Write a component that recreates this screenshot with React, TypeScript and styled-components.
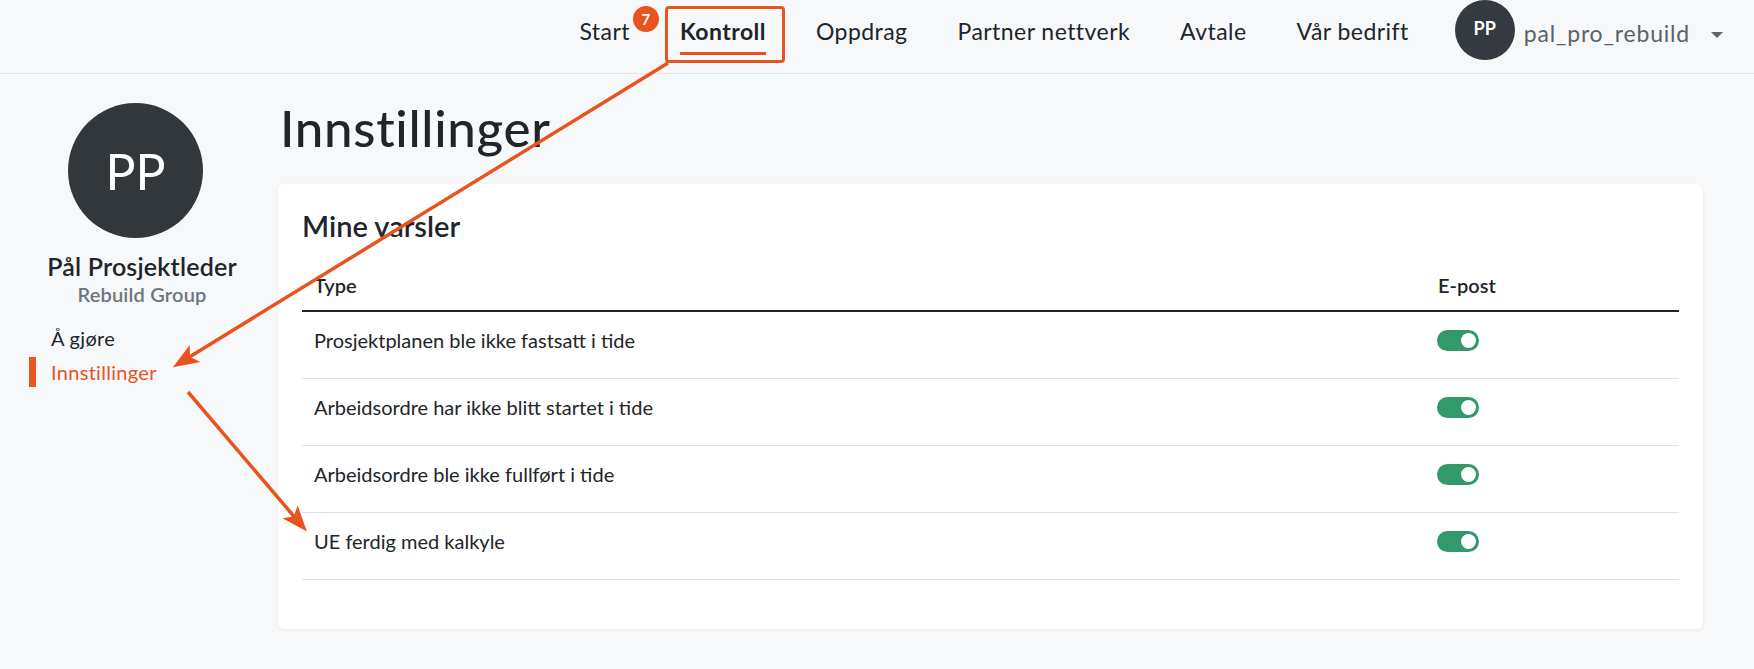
import styled, { createGlobalStyle } from 'styled-components';

const ORANGE = '#e9531d';

const GlobalStyle = createGlobalStyle`
  * { box-sizing: border-box; }
  body {
    margin: 0;
    background: #f7f8fa;
    font-family: Lato, 'Noto Sans', sans-serif;
    color: #212529;
  }
`;

const NAV = [
  { label: 'Start' },
  { label: 'Kontroll', active: true, badge: 7 },
  { label: 'Oppdrag' },
  { label: 'Partner nettverk' },
  { label: 'Avtale' },
  { label: 'Vår bedrift' },
];

const ALERTS = [
  'Prosjektplanen ble ikke fastsatt i tide',
  'Arbeidsordre har ikke blitt startet i tide',
  'Arbeidsordre ble ikke fullført i tide',
  'UE ferdig med kalkyle',
];

export default function App() {
  return (
    <Page>
      <GlobalStyle />
      <Header>
        <NavList>
          {NAV.map((item) => (
            <NavLink key={item.label} href="#" $active={item.active}>
              {item.badge && <Badge>{item.badge}</Badge>}
              {item.active && <Highlight />}
              {item.label}
            </NavLink>
          ))}
        </NavList>
        <UserMenu>
          <HeaderAvatar>PP</HeaderAvatar>
          <UserName>pal_pro_rebuild</UserName>
          <Caret />
        </UserMenu>
      </Header>

      <Layout>
        <Sidebar>
          <Profile>
            <BigAvatar>PP</BigAvatar>
            <ProfileName>Pål Prosjektleder</ProfileName>
            <Company>Rebuild Group</Company>
          </Profile>
          <Menu>
            <MenuItem href="#">Å gjøre</MenuItem>
            <MenuItem href="#" $active>
              Innstillinger
            </MenuItem>
          </Menu>
        </Sidebar>

        <Main>
          <Title>Innstillinger</Title>
          <Card>
            <CardTitle>Mine varsler</CardTitle>
            <Table>
              <thead>
                <tr>
                  <Th style={{ width: 1124 }}>Type</Th>
                  <Th>E-post</Th>
                </tr>
              </thead>
              <tbody>
                {ALERTS.map((a) => (
                  <tr key={a}>
                    <Td>{a}</Td>
                    <Td>
                      <Switch />
                    </Td>
                  </tr>
                ))}
              </tbody>
            </Table>
          </Card>
        </Main>
      </Layout>

      <Annotations width="1754" height="669" viewBox="0 0 1754 669">
        <defs>
          <marker
            id="head"
            markerUnits="userSpaceOnUse"
            markerWidth="28"
            markerHeight="22"
            viewBox="0 0 28 22"
            refX="20"
            refY="11"
            orient="auto"
          >
            <path d="M0,1 L26,11 L0,21 L6,11 Z" fill={ORANGE} />
          </marker>
        </defs>
        <line x1="668" y1="63" x2="178" y2="364" stroke={ORANGE} strokeWidth="3.5" markerEnd="url(#head)" />
        <line x1="188" y1="392" x2="303" y2="527" stroke={ORANGE} strokeWidth="3.5" markerEnd="url(#head)" />
      </Annotations>
    </Page>
  );
}

const Page = styled.div`
  position: relative;
  min-height: 100vh;
`;

const Header = styled.header`
  height: 74px;
  border-bottom: 1px solid #e5e7ea;
  display: flex;
  justify-content: flex-end;
  padding-right: 31px;
`;

const NavList = styled.nav`
  display: flex;
  gap: 36px;
  margin-right: 39px;
`;

const NavLink = styled.a<{ $active?: boolean }>`
  position: relative;
  padding: 17px 7px 0;
  font-size: 23px;
  line-height: 28px;
  letter-spacing: 0.45px;
  color: #212529;
  font-weight: ${(p) => (p.$active ? 700 : 400)};
  text-decoration: none;
  white-space: nowrap;

  &::after {
    content: '';
    display: block;
    height: 3px;
    margin-top: 7px;
    background: ${(p) => (p.$active ? ORANGE : 'transparent')};
  }
`;

const Highlight = styled.span`
  position: absolute;
  top: 6px;
  left: -8px;
  right: -12px;
  height: 57px;
  border: 3px solid ${ORANGE};
  border-radius: 4px;
`;

const Badge = styled.span`
  position: absolute;
  top: 6px;
  left: -40px;
  width: 26px;
  height: 26px;
  border-radius: 50%;
  background: ${ORANGE};
  color: #fff;
  font-size: 15px;
  letter-spacing: 0;
  font-weight: 700;
  display: flex;
  align-items: center;
  justify-content: center;
`;

const UserMenu = styled.div`
  display: flex;
  align-items: center;
  height: 60px;
`;

const HeaderAvatar = styled.div`
  width: 60px;
  height: 60px;
  border-radius: 50%;
  background: #343a40;
  color: #fff;
  font-weight: 700;
  font-size: 18px;
  display: flex;
  align-items: center;
  justify-content: center;
  padding-bottom: 5px;
`;

const UserName = styled.span`
  margin-left: 9px;
  padding-top: 6px;
  font-size: 23px;
  letter-spacing: 0.8px;
  color: #5b6168;
`;

const Caret = styled.span`
  margin-left: 21px;
  margin-top: 9px;
  width: 0;
  height: 0;
  border-left: 6px solid transparent;
  border-right: 6px solid transparent;
  border-top: 6px solid #5f6368;
`;

const Layout = styled.div`
  display: flex;
  gap: 23px;
  padding: 29px 51px 0 29px;
`;

const Sidebar = styled.aside`
  width: 226px;
  flex-shrink: 0;
  display: flex;
  flex-direction: column;
`;

const Profile = styled.div`
  display: flex;
  flex-direction: column;
  align-items: center;
`;

const BigAvatar = styled.div`
  width: 135px;
  height: 135px;
  margin-right: 13px;
  border-radius: 50%;
  background: #32373b;
  color: #fff;
  font-size: 50px;
  display: flex;
  align-items: center;
  justify-content: center;
`;

const ProfileName = styled.div`
  margin-top: 14px;
  font-size: 25px;
  line-height: 28px;
  letter-spacing: 0.2px;
  font-weight: 600;
  white-space: nowrap;
`;

const Company = styled.div`
  margin-top: 2px;
  font-size: 20px;
  line-height: 24px;
  letter-spacing: 0.2px;
  font-weight: 600;
  color: #6c757d;
`;

const Menu = styled.nav`
  margin-top: 17px;
  display: flex;
  flex-direction: column;
  gap: 4px;
`;

const MenuItem = styled.a<{ $active?: boolean }>`
  display: block;
  border-left: 7px solid ${(p) => (p.$active ? ORANGE : 'transparent')};
  padding-left: 15px;
  font-size: 20px;
  line-height: 30px;
  letter-spacing: 0.3px;
  color: ${(p) => (p.$active ? ORANGE : '#212529')};
  text-decoration: none;
`;

const Main = styled.main`
  flex: 1;
`;

const Title = styled.h1`
  margin: 0 0 31px 2px;
  font-size: 51px;
  line-height: 50px;
  letter-spacing: 0.7px;
  font-weight: 500;
`;

const Card = styled.section`
  background: #fff;
  border-radius: 6px;
  box-shadow: 0 1px 4px rgba(0, 0, 0, 0.06);
  padding: 26px 24px 49px;
`;

const CardTitle = styled.h2`
  margin: 0;
  font-size: 29px;
  line-height: 32px;
  font-weight: 600;
`;

const Table = styled.table`
  margin-top: 19px;
  width: 100%;
  border-collapse: collapse;
`;

const Th = styled.th`
  text-align: left;
  padding: 12px 12px 13px;
  font-size: 20px;
  line-height: 24px;
  font-weight: 600;
  border-bottom: 2px solid #212529;
`;

const Td = styled.td`
  padding: 16px 12px 26px;
  font-size: 20px;
  line-height: 24px;
  border-bottom: 1px solid #dee2e6;
  vertical-align: middle;
`;

const Switch = styled.span`
  display: block;
  position: relative;
  width: 42px;
  height: 21px;
  border-radius: 11px;
  background: #31996a;
  margin-left: -1px;

  &::after {
    content: '';
    position: absolute;
    top: 3px;
    right: 3px;
    width: 15px;
    height: 15px;
    border-radius: 50%;
    background: #fff;
  }
`;

const Annotations = styled.svg`
  position: absolute;
  top: 0;
  left: 0;
  pointer-events: none;
`;
